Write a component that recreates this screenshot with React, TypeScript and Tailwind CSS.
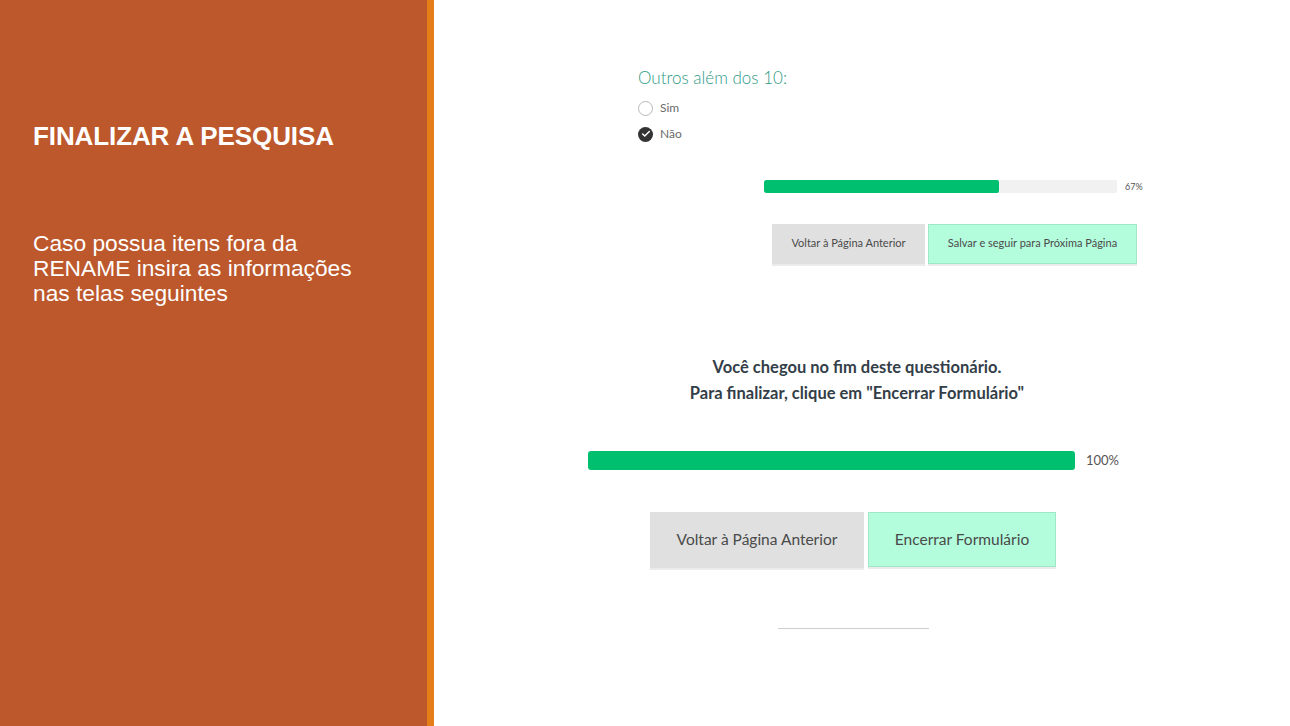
import { Check } from 'lucide-react'

const survey = { fontFamily: 'Lato, "Open Sans", sans-serif' }

function Radio({ label, checked }: { label: string; checked?: boolean }) {
  return (
    <div className="flex items-center gap-[7px] h-[26px]">
      {checked ? (
        <span className="w-[15px] h-[15px] rounded-full bg-[#333333] flex items-center justify-center">
          <Check size={10} strokeWidth={3.5} color="#fff" />
        </span>
      ) : (
        <span className="w-[15px] h-[15px] rounded-full border border-[#b8b8b8] bg-white" />
      )}
      <span className="text-[12px] text-[#6b6b6b]">{label}</span>
    </div>
  )
}

export default function App() {
  return (
    <div className="flex w-[1290px] h-[726px] overflow-hidden bg-white">
      {/* slide side */}
      <div className="w-[427px] shrink-0 bg-[#bc582c] text-white pl-[33px] pt-[121px]"
        style={{ fontFamily: '"Liberation Sans", Arial, sans-serif' }}>
        <h1 className="text-[26px] font-bold leading-[30px] tracking-[-0.1px]">FINALIZAR A PESQUISA</h1>
        <p className="mt-[80px] text-[22.75px] leading-[25px] w-[360px]">
          Caso possua itens fora da RENAME insira as informações nas telas seguintes
        </p>
      </div>
      <div className="w-[7px] shrink-0 bg-[#e57e16]" />

      {/* survey screenshots */}
      <div className="flex-1 relative" style={survey}>
        <div className="ml-[204px] pt-[66px]">
          <p className="text-[17px] font-light leading-[24px] text-[#2f9a86]">Outros além dos 10:</p>
          <div className="mt-[5px]">
            <Radio label="Sim" />
            <Radio label="Não" checked />
          </div>
        </div>

        <div className="ml-[330px] mt-[33px] flex items-center">
          <div className="w-[353px] h-[13px] rounded-[2px] bg-[#f1f1f1] overflow-hidden">
            <div className="h-full w-[235px] rounded-[2px] bg-[#00bf6f]" />
          </div>
          <span className="ml-[8px] text-[9px] text-[#555]">67%</span>
        </div>

        <div className="ml-[338px] mt-[30px] flex gap-[3px]">
          <button className="w-[153px] h-[40px] bg-[#e0e0e0] text-[11px] text-[#4a4a4a] shadow-[0_2px_0_#ebebeb]">
            Voltar à Página Anterior
          </button>
          <button className="w-[209px] h-[40px] bg-[#b3fddd] border border-[#a2e6c8] text-[11px] text-[#4a4a4a] shadow-[0_2px_0_#ebebeb]">
            Salvar e seguir para Próxima Página
          </button>
        </div>

        <div className="mt-[90px] w-[846px] text-center text-[16.5px] font-bold leading-[26px] text-[#333e48]">
          <p>Você chegou no fim deste questionário.</p>
          <p>Para finalizar, clique em "Encerrar Formulário"</p>
        </div>

        <div className="ml-[154px] mt-[45px] flex items-center">
          <div className="w-[487px] h-[19px] rounded-[3px] bg-[#00bf6f]" />
          <span className="ml-[11px] text-[13px] text-[#555]">100%</span>
        </div>

        <div className="ml-[216px] mt-[42px] flex items-start gap-[4px]">
          <button className="w-[214px] h-[56px] bg-[#e0e0e0] text-[15.5px] text-[#4a4a4a] shadow-[0_2px_0_#ebebeb]">
            Voltar à Página Anterior
          </button>
          <button className="w-[188px] h-[55px] bg-[#b3fddd] border border-[#a2e6c8] text-[15.5px] text-[#4a4a4a] shadow-[0_2px_0_#ebebeb]">
            Encerrar Formulário
          </button>
        </div>

        <div className="ml-[344px] mt-[60px] w-[151px] h-[1px] bg-[#cfcfcf]" />
      </div>
    </div>
  )
}
